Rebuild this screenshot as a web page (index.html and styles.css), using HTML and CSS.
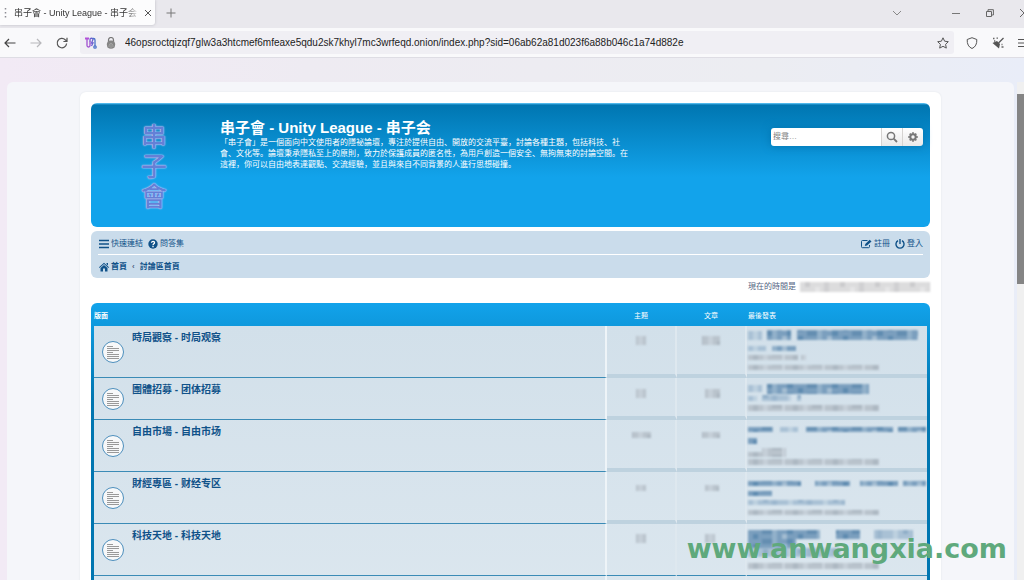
FILE: index.html
```html
<!DOCTYPE html>
<html lang="zh-Hant">
<head>
<meta charset="utf-8">
<title>串子會 - Unity League - 串子会</title>
<link rel="stylesheet" href="styles.css">
</head>
<body>
<svg class="defs" aria-hidden="true">
  <defs>
    <pattern id="dark" width="45" height="10" patternUnits="userSpaceOnUse">
      <rect width="45" height="10" fill="#7b9fbe"/>
      <rect x="5" width="5" height="5" fill="#5f8bb0"/><rect x="14" y="5" width="10" height="5" fill="#648eb1"/>
      <rect x="24" width="5" height="10" fill="#92b1ca"/><rect x="34" width="5" height="5" fill="#a3bdd2"/><rect x="39" y="5" width="6" height="5" fill="#5f8bb0"/>
    </pattern>
    <pattern id="mid" width="35" height="10" patternUnits="userSpaceOnUse">
      <rect width="35" height="10" fill="#a9c1d5"/>
      <rect x="5" width="5" height="10" fill="#bdd0df"/><rect x="15" y="5" width="5" height="5" fill="#8fadc7"/><rect x="24" width="5" height="10" fill="#9bb6cd"/>
    </pattern>
    <pattern id="gray" width="40" height="10" patternUnits="userSpaceOnUse">
      <rect width="40" height="10" fill="#b9c3cc"/>
      <rect x="5" width="5" height="10" fill="#adb8c2"/><rect x="15" width="5" height="10" fill="#c5cfd8"/><rect x="24" y="5" width="10" height="5" fill="#abb6c0"/><rect x="34" width="3" height="10" fill="#c9d3dc"/>
    </pattern>
    <pattern id="pale" width="35" height="10" patternUnits="userSpaceOnUse">
      <rect width="35" height="10" fill="#dcdcdd"/>
      <rect x="5" width="5" height="5" fill="#cbcbcd"/><rect x="15" y="5" width="5" height="5" fill="#e6e6e7"/><rect x="24" width="5" height="10" fill="#d0d0d2"/>
    </pattern>
    <symbol id="topic" viewBox="0 0 24 24">
      <circle cx="12" cy="12" r="10.5" fill="#f7f8f9" stroke="#4d8fbd"/>
      <path d="M6 6.500h6M6 8.500h12M6 10.500h12M6 12.500h6M6 14.500h12M6 16.500h12M6 18.500h12" stroke="#999" fill="none"/>
    </symbol>
  </defs>
</svg>

<header class="chrome">
  <div class="tabs">
    <div class="tab">
      <svg class="grip" viewBox="0 0 3 12"><path d="M1.500 1v10" stroke="#8d8d95" stroke-width="1.500" stroke-dasharray="1.500 2.500"/></svg>
      <span class="tab-title">串子會 - Unity League - 串子会</span>
      <button class="icon-btn" aria-label="關閉分頁"><svg width="8" height="8" viewBox="0 0 8 8"><path d="M1 1l6 6M7 1l-6 6" stroke="#555" fill="none"/></svg></button>
    </div>
    <button class="icon-btn" aria-label="新分頁"><svg width="10" height="10" viewBox="0 0 10 10"><path d="M5 .5v9M.5 5h9" stroke="#777" fill="none"/></svg></button>
    <div class="window-controls">
      <button class="icon-btn list-tabs" aria-label="列出分頁"><svg width="10" height="6" viewBox="0 0 10 6"><path d="M1 1l4 4 4-4" stroke="#888" fill="none"/></svg></button>
      <button class="icon-btn" aria-label="最小化"><svg width="8" height="8" viewBox="0 0 8 8"><path d="M0 4.500h8" stroke="#777" fill="none"/></svg></button>
      <button class="icon-btn" aria-label="還原"><svg width="8" height="8" viewBox="0 0 8 8"><path d="M.5 2.500h5v5h-5zM2 2V.7h5.400V6H6" stroke="#666" fill="none"/></svg></button>
      <button class="icon-btn" aria-label="關閉"><svg width="8" height="8" viewBox="0 0 8 8"><path d="M0 0l8 8M8 0L0 8" stroke="#666" fill="none"/></svg></button>
    </div>
  </div>
  <div class="toolbar">
    <div class="history">
      <button class="icon-btn" aria-label="上一頁"><svg width="12" height="10" viewBox="0 0 12 10"><path d="M11.500 5H1M5 1L1 5l4 4" stroke="#444" stroke-width="1.200" fill="none"/></svg></button>
      <button class="icon-btn" aria-label="下一頁"><svg width="12" height="10" viewBox="0 0 12 10"><path d="M.5 5H11M7 1l4 4-4 4" stroke="#b8b8bc" stroke-width="1.200" fill="none"/></svg></button>
      <button class="icon-btn" aria-label="重新載入"><svg width="12" height="12" viewBox="0 0 12 12"><path d="M10.600 6.500A4.700 4.700 0 1 1 9.200 2.700L11 4.300M11 .8v3.700H7.400" stroke="#555" stroke-width="1.200" fill="none"/></svg></button>
    </div>
    <div class="address">
      <svg width="12" height="12" viewBox="0 0 12 12" fill="none" stroke-width="1.300"><path d="M2 2v6.500a1.500 1.500 0 0 0 3 0V4" stroke="#a04fd0"/><path d="M0 1.500h4" stroke="#b250d8" stroke-width="2"/><path d="M5 4.500V3a1.500 1.500 0 0 1 3-.5L6.500 6H8L6.500 9" stroke="#6d60d0"/><path d="M7.500 1.500h1A1.500 1.500 0 0 1 10 3v6" stroke="#4b72c9"/><circle cx="10" cy="10" r="1.200" stroke="#4b72c9"/></svg>
      <svg width="10" height="12" viewBox="0 0 10 12"><path d="M2.500 5V3a2.500 2.500 0 0 1 5 0v2" stroke="#777" stroke-width="1.200" fill="none"/><path d="M5 3.500c5 0 4.500 5 3.500 7Q5 13 1.500 10.500c-1-2-1.500-7 3.500-7z" fill="#858585"/><path d="M3 10c0-5 4-5 4 0M5 7v4" stroke="#bbb" stroke-width=".6" fill="none"/></svg>
      <input class="url" type="text" aria-label="網址" value="46opsroctqizqf7glw3a3htcmef6mfeaxe5qdu2sk7khyl7mc3wrfeqd.onion/index.php?sid=06ab62a81d023f6a88b046c1a74d882e">
      <button class="icon-btn" aria-label="加入書籤"><svg width="12" height="12" viewBox="0 0 12 12"><path d="M6 .8l1.600 3.400 3.700.5-2.700 2.600.7 3.800L6 9.300l-3.300 1.800.7-3.800L.7 4.700l3.700-.5z" stroke="#555" fill="none" stroke-linejoin="round"/></svg></button>
    </div>
    <div class="tools">
      <button class="icon-btn" aria-label="安全等級"><svg width="12" height="12" viewBox="0 0 12 12"><path d="M6 .7L10.800 2.500C11 7 9.500 10 6 11.500 2.500 10 1 7 1.200 2.500z" stroke="#555" fill="none"/></svg></button>
      <button class="icon-btn" aria-label="新身分"><svg width="12" height="12" viewBox="0 0 12 12"><path d="M11.500 1L6.500 6" stroke="#555" stroke-width="1.300"/><path d="M5 4l3 3-1 4.500L4 9 .5 6z" fill="#555"/><path d="M1 1.500h1.500M4.500 1.200H6M2 4h1.300M9.500 10h2M9.500 7.500h1" stroke="#666" stroke-width="1.300"/></svg></button>
      <button class="icon-btn" aria-label="選單"><svg width="10" height="10" viewBox="0 0 10 10"><path d="M0 1.500h10M0 5h10M0 8.500h10" stroke="#555"/></svg></button>
    </div>
  </div>
</header>

<div class="viewport">
  <div class="panel">
    <div class="wrap">
      <div class="banner">
        <a class="logo" href="#">串子會</a>
        <div class="site">
          <h1>串子會 - Unity League - 串子会</h1>
          <p lang="zh-Hans">「串子會」是一個面向中文使用者的隱祕論壇，專注於提供自由、開放的交流平臺，討論各種主題，包括科技、社<br>會、文化等。論壇秉承隱私至上的原則，致力於保護成員的匿名性，為用戶創造一個安全、無拘無束的討論空間。在<br>這裡，你可以自由地表達觀點、交流經驗，並且與來自不同背景的人進行思想碰撞。</p>
        </div>
        <form class="search">
          <input type="search" placeholder="搜尋…" aria-label="搜尋">
          <button type="button" aria-label="搜尋"><svg width="12" height="12" viewBox="0 0 12 12"><circle cx="5" cy="5" r="3.600" stroke="#777" stroke-width="1.500" fill="none"/><path d="M7.700 7.700L11 11" stroke="#777" stroke-width="1.800"/></svg></button>
          <button type="button" aria-label="進階搜尋"><svg width="10" height="10" viewBox="0 0 10 10"><circle cx="5" cy="5" r="2.700" fill="none" stroke="#777" stroke-width="2"/><path d="M5 .3v1.500M5 8.200v1.500M.3 5h1.500M8.200 5h1.500M1.700 1.700l1 1M7.300 7.300l1 1M8.300 1.700l-1 1M2.700 7.300l-1 1" stroke="#777" stroke-width="1.800"/></svg></button>
        </form>
      </div>

      <nav class="navbar">
        <div class="nav-row">
          <a href="#"><svg width="10" height="10" viewBox="0 0 10 10"><path d="M0 1.500h10M0 5h10M0 8.500h10" stroke="#105289" stroke-width="1.600"/></svg>快速連結</a>
          <a href="#"><svg width="10" height="10" viewBox="0 0 10 10"><circle cx="5" cy="5" r="4.700" fill="#105289"/><path d="M3.500 3.800C3.600 1.700 6.700 2 6.500 3.900 6.400 4.800 5 4.900 5 6.200M5 7v1.300" stroke="#fff" stroke-width="1.300" fill="none"/></svg>問答集</a>
          <span class="spacer"></span>
          <a href="#"><svg width="11" height="10" viewBox="0 0 11 10"><path d="M8.500 6v1.700a1 1 0 0 1-1 1h-6a1 1 0 0 1-1-1V2.500a1 1 0 0 1 1-1h5" stroke="#105289" fill="none"/><path d="M3.800 7l.5-2L8.700.7l1.800 1.700L6 6.600z" fill="#105289"/></svg>註冊</a>
          <a href="#"><svg width="10" height="10" viewBox="0 0 10 10"><path d="M3 1.700a4 4 0 1 0 4 0M5 0v5" stroke="#105289" stroke-width="1.400" fill="none"/></svg>登入</a>
        </div>
        <div class="nav-row crumbs">
          <a href="#"><svg width="10" height="10" viewBox="0 0 10 10"><path d="M5 .8L10 5.300l-.6.600L5 2 .6 5.900 0 5.300zM7.500 1H9v2.500L7.500 2.300zM1.500 6L5 2.900 8.500 6v3.500H6V6.500H4v3H1.500z" fill="#105289"/></svg>首頁</a>
          <span class="arrow">‹</span>
          <a href="#">討論區首頁</a>
        </div>
      </nav>

      <p class="time">現在的時間是<svg class="mosaic-time" width="130" height="10" viewBox="0 0 130 10"><rect width="130" height="10" fill="url(#pale)"/></svg></p>

      <div class="forabg">
        <table>
          <thead>
            <tr><th class="forum">版面</th><th class="count">主題</th><th class="count">文章</th><th class="last">最後發表</th></tr>
          </thead>
          <tbody>
            <tr>
              <td class="forum"><div class="entry"><svg class="topic"><use href="#topic"/></svg><a href="#">時局觀察 - 时局观察</a></div></td>
              <td class="count"><svg class="mosaic-count"><rect x="13" y="10" width="10" height="9" fill="url(#gray)"/></svg></td>
              <td class="count"><svg class="mosaic-count"><rect x="9" y="10" width="18" height="9" fill="url(#gray)"/></svg></td>
              <td class="last"><svg class="mosaic"><path d="M0 5h14v9H0zM0 20h18v5H0z" fill="url(#mid)"/><path d="M19 4h24v10H19zM49 4h121v10H49zM24 20h24v5H24z" fill="url(#dark)"/><path d="M0 29h50v5H0zM53 29h5v5h-5zM0 39h131v5H0z" fill="url(#gray)"/></svg></td>
            </tr>
            <tr class="short">
              <td class="forum"><div class="entry"><svg class="topic"><use href="#topic"/></svg><a href="#">團體招募 - 团体招募</a></div></td>
              <td class="count"><svg class="mosaic-count"><rect x="13" y="11" width="10" height="9" fill="url(#gray)"/></svg></td>
              <td class="count"><svg class="mosaic-count"><rect x="12" y="11" width="15" height="9" fill="url(#gray)"/></svg></td>
              <td class="last"><svg class="mosaic"><path d="M0 7h14v7H0zM0 18h9v5H0zM14 17h29v6H14zM49 17h4v6h-4z" fill="url(#mid)"/><path d="M19 6h102v10H19z" fill="url(#dark)"/><path d="M0 27h131v6H0z" fill="url(#gray)"/></svg></td>
            </tr>
            <tr>
              <td class="forum"><div class="entry"><svg class="topic"><use href="#topic"/></svg><a href="#">自由市場 - 自由市场</a></div></td>
              <td class="count"><svg class="mosaic-count"><rect x="9" y="12" width="19" height="6" fill="url(#gray)"/></svg></td>
              <td class="count"><svg class="mosaic-count"><rect x="9" y="12" width="18" height="6" fill="url(#gray)"/></svg></td>
              <td class="last"><svg class="mosaic"><path d="M32 7h18v5H32z" fill="url(#mid)"/><path d="M0 7h25v5H0zM58 7h87v5H58zM150 7h28v5h-28zM0 18h9v6H0z" fill="url(#dark)"/><path d="M0 32h14v5H0zM14 28h24v9H14zM0 39h131v6H0z" fill="url(#gray)"/></svg></td>
            </tr>
            <tr>
              <td class="forum"><div class="entry"><svg class="topic"><use href="#topic"/></svg><a href="#">財經專區 - 财经专区</a></div></td>
              <td class="count"><svg class="mosaic-count"><rect x="13" y="13" width="10" height="6" fill="url(#gray)"/></svg></td>
              <td class="count"><svg class="mosaic-count"><rect x="12" y="13" width="14" height="6" fill="url(#gray)"/></svg></td>
              <td class="last"><svg class="mosaic"><path d="M0 28h97v5H0z" fill="url(#mid)"/><path d="M0 9h53v5H0zM67 9h35v5H67zM112 9h38v5h-38zM155 9h23v5h-23zM0 19h24v5H0z" fill="url(#dark)"/><path d="M0 38h131v5H0z" fill="url(#gray)"/></svg></td>
            </tr>
            <tr class="solid">
              <td class="forum"><div class="entry"><svg class="topic"><use href="#topic"/></svg><a href="#">科技天地 - 科技天地</a></div></td>
              <td class="count"><svg class="mosaic-count"><rect x="13" y="10" width="10" height="9" fill="url(#gray)"/></svg></td>
              <td class="count"><svg class="mosaic-count"><rect x="12" y="10" width="10" height="9" fill="url(#gray)"/></svg></td>
              <td class="last"><svg class="mosaic"><path d="M126 6h39v9h-39zM0 24h92v9H0z" fill="url(#mid)"/><path d="M0 6h72v9H0zM88 6h24v9H88zM0 15h48v9H0z" fill="url(#dark)"/><path d="M0 39h131v6H0z" fill="url(#gray)"/></svg></td>
            </tr>
            <tr class="short"><td class="forum"></td><td class="count"></td><td class="count"></td><td class="last"></td></tr>
          </tbody>
        </table>
      </div>
    </div>
  </div>
  <div class="scrollbar"><div class="thumb"></div></div>
</div>
<div class="watermark">www.anwangxia.com</div>
</body>
</html>
```
FILE: styles.css
```css
* { box-sizing: border-box; }

body {
  margin: 0;
  height: 100vh;
  display: flex;
  flex-direction: column;
  overflow: hidden;
  font: 8px/10px "Liberation Sans", "Noto Sans CJK TC", sans-serif;
  color: #536482;
  background: linear-gradient(90deg, #f2eaf5, #eeebf2 30%, #ecedf2 75%, #e9edf8);
}

a { color: #105289; text-decoration: none; }
svg { flex: none; }
.defs { position: absolute; width: 0; height: 0; }

.icon-btn {
  display: flex;
  padding: 0;
  border: 0;
  background: none;
}

/* Browser frame */
.tabs {
  display: flex;
  align-items: center;
  gap: 11px;
  height: 28px;
  padding-bottom: 3px;
  background: #e9e8ed;
}
.tab {
  display: flex;
  align-items: center;
  gap: 7px;
  width: 155px;
  height: 25px;
  padding: 0 8px 0 4px;
  background: #fcfcfd;
  border-radius: 0 0 3px 0;
  box-shadow: 0 0 3px #b9b9c0;
}
.grip { width: 3px; height: 12px; }
.tab-title {
  flex: 1;
  white-space: nowrap;
  font-size: 9px;
  line-height: 14px;
  color: #333;
  -webkit-mask-image: linear-gradient(90deg, #000 90%, #0003);
  mask-image: linear-gradient(90deg, #000 90%, #0003);
}
.window-controls {
  display: flex;
  align-items: center;
  gap: 26px;
  margin-left: auto;
  margin-right: -4px;
}
.list-tabs { margin-right: 24px; }

.toolbar {
  display: flex;
  align-items: center;
  gap: 12px;
  height: 30px;
  padding: 0 0 0 4px;
  background: #f9f9fb;
  border-bottom: 1px solid #dedde4;
}
.history { display: flex; align-items: center; gap: 14px; }
.address {
  flex: 1;
  display: flex;
  align-items: center;
  gap: 9px;
  height: 23px;
  padding: 0 5px;
  background: #f0eff4;
  border-radius: 3px;
}
.url {
  flex: 1;
  min-width: 0;
  padding: 0;
  border: 0;
  background: none;
  font: 10px/14px "Liberation Sans", sans-serif;
  color: #222;
}
.tools {
  display: flex;
  align-items: center;
  gap: 14px;
  margin-right: -4px;
}

/* Page area */
.viewport {
  flex: 1;
  min-height: 0;
  display: flex;
  gap: 3px;
  padding: 24px 0 0 7px;
  overflow: hidden;
}
.panel {
  flex: 1;
  padding: 10px 73px 0;
  background: #f5f6fa;
  border-radius: 6px 6px 0 0;
}
.wrap {
  padding: 11px;
  background: #fff;
  border-radius: 6px;
  box-shadow: 0 0 2px #dfe3e8;
}
.scrollbar { width: 7px; padding-top: 12px; background: #f0f0f0; }
.thumb { height: 190px; background: #858585; }

.banner {
  display: flex;
  align-items: flex-start;
  height: 124px;
  padding: 17px 7px 0 49px;
  background: linear-gradient(#6aceff 0, #0076b1 2px, #12a3eb 74px);
  border-radius: 6px;
}
.logo {
  width: 28px;
  margin-right: 52px;
  font: 500 26px/30px "Noto Sans CJK TC", sans-serif;
  text-align: center;
  word-break: break-all;
  color: #6480d6;
  text-shadow: 0 0 1px #e4dcff, 0 0 2px #c9c8ff;
}
.site { color: #fff; }
h1 {
  margin: 0;
  font-size: 15px;
  line-height: 16px;
}
.site p {
  margin: 0;
  white-space: nowrap;
  font-family: "Noto Sans CJK SC", sans-serif;
  line-height: 11px;
}

.search {
  display: flex;
  width: 152px;
  height: 18px;
  margin: 8px 0 0 auto;
  overflow: hidden;
  border-radius: 3px;
  box-shadow: 0 0 8px #0075b0;
}
.search input {
  flex: 1;
  min-width: 0;
  padding: 0 2px;
  border: 0;
  background: #fff;
  font: inherit;
}
.search input::placeholder { color: #808080; }
.search button {
  display: flex;
  align-items: center;
  justify-content: center;
  width: 21px;
  padding: 0;
  border: 0;
  border-left: 1px solid #d5d3d1;
  background: linear-gradient(#fff, #e9e9e9);
}

.navbar {
  margin-top: 4px;
  padding: 0 7px;
  background: #cadceb;
  border-radius: 6px;
}
.nav-row {
  display: flex;
  align-items: center;
  gap: 5px;
  height: 23px;
  padding: 3px 0 0 1px;
}
.nav-row a { display: flex; align-items: center; gap: 2px; }
.crumbs { height: 24px; padding-top: 0; border-top: 1px solid #fff; font-weight: bold; }
.spacer { flex: 1; }

.time {
  display: flex;
  justify-content: flex-end;
  align-items: center;
  gap: 4px;
  height: 18px;
  margin: 0 0 7px;
}

.forabg {
  padding: 0 3px;
  background: linear-gradient(#12a3eb, #0e98dc 24px, #0076b1 96px);
  border-radius: 6px 6px 0 0;
}
table {
  width: 100%;
  border-collapse: separate;
  border-spacing: 0;
  table-layout: fixed;
}
th {
  height: 23px;
  padding: 2px 0 0;
  font-size: 7px;
  line-height: 10px;
  text-align: left;
  color: #fff;
}
th.count, th.last { font-weight: normal; }
th.last { padding-left: 1px; }
tbody { background: linear-gradient(#d2e0ea, #dce7ef); }
td {
  height: 52px;
  padding: 0;
  vertical-align: top;
  border-bottom: 4px solid #bed2df;
}
.short td { height: 42px; }
.count { width: 70px; text-align: center; }
th.count { padding-right: 2px; }
.last { width: 180px; }
td.forum { border-bottom: 1px solid #3b8bb6; border-right: 2px solid #eef4f8; }
td.count { border-right: 2px solid #dee8ef; }
tr.solid td { border-bottom: 1px solid #3b8bb6; }
.entry {
  display: flex;
  align-items: center;
  gap: 7px;
  height: 51px;
  padding-left: 7px;
}
.short .entry { height: 41px; }
.entry a {
  align-self: flex-start;
  padding-top: 5px;
  font-size: 10px;
  line-height: 14px;
  font-weight: bold;
}
.topic { width: 24px; height: 24px; }
.mosaic, .mosaic-count, .mosaic-time { display: block; filter: blur(1px); }
.mosaic { width: 178px; height: 46px; margin-left: 1px; }
.short .mosaic { height: 38px; }
.mosaic-count { width: 36px; height: 24px; margin: 0 auto; }

.watermark {
  position: absolute;
  right: 17px;
  bottom: 15px;
  font: bold 27px/32px "DejaVu Sans", sans-serif;
  color: #5fa97c;
}
```
